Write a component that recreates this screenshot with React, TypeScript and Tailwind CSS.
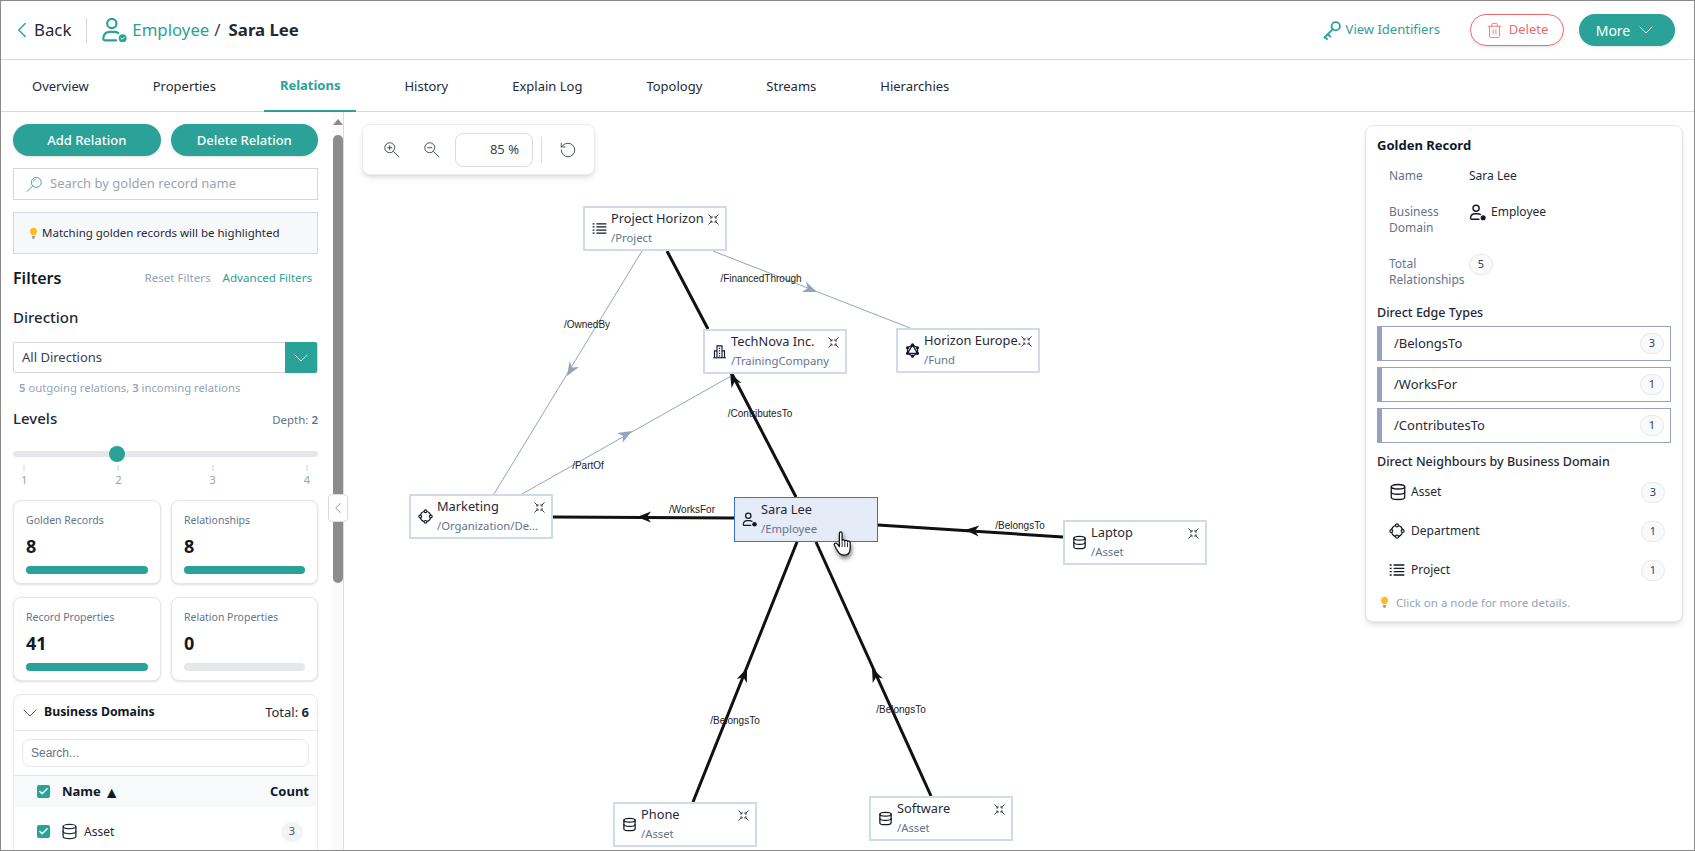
import { ChevronDown, ChevronLeft, Database, RotateCcw, Trash2, Check } from "lucide-react";

const tabs = ["Overview", "Properties", "Relations", "History", "Explain Log", "Topology", "Streams", "Hierarchies"];

function PersonCheck({ className, check }: { className?: string; check?: boolean }) {
  return (
    <svg viewBox="0 0 24 24" fill="none" stroke="currentColor" strokeWidth="2" strokeLinecap="round" className={className}>
      <circle cx="10" cy="6" r="4.300" />
      <path d="M14 21.500H3.800C2.700 21.500 2 20.800 2.100 19.700C2.500 16 5 13.800 8.500 13.800H12C13.500 13.800 14.800 14.100 16 14.800" />
      <circle cx="20" cy="19.500" r="3.600" fill="currentColor" stroke="none" />
      {check && <path d="M18.400 19.500l1.100 1.100 2-2.100" stroke="#fff" strokeWidth="0.9" />}
    </svg>
  );
}

function DeptIcon({ className }: { className?: string }) {
  return (
    <svg viewBox="0 0 24 24" fill="none" stroke="currentColor" strokeWidth="1.8" className={className}>
      <circle cx="12" cy="12" r="8.500" />
      <circle cx="12" cy="3.500" r="2.200" fill="#fff" />
      <circle cx="12" cy="20.500" r="2.200" fill="#fff" />
      <circle cx="3.500" cy="12" r="2.200" fill="#fff" />
      <circle cx="20.500" cy="12" r="2.200" fill="#fff" />
    </svg>
  );
}

function FundIcon({ className }: { className?: string }) {
  return (
    <svg viewBox="0 0 24 24" fill="none" stroke="currentColor" strokeWidth="2" strokeLinejoin="round" className={className}>
      <path d="M12 3L20 7.500V16.500L12 21L4 16.500V7.500Z" />
      <path d="M12 3L20 16.500H4Z" />
      <circle cx="12" cy="3" r="1.500" fill="currentColor" />
      <circle cx="20" cy="7.500" r="1.500" fill="currentColor" />
      <circle cx="20" cy="16.500" r="1.500" fill="currentColor" />
      <circle cx="12" cy="21" r="1.500" fill="currentColor" />
      <circle cx="4" cy="16.500" r="1.500" fill="currentColor" />
      <circle cx="4" cy="7.500" r="1.500" fill="currentColor" />
    </svg>
  );
}

function CompanyIcon({ className }: { className?: string }) {
  return (
    <svg viewBox="0 0 24 24" fill="none" stroke="currentColor" strokeWidth="1.800" className={className}>
      <path d="M2 22H22" />
      <path d="M8 22V3H16V22" />
      <path d="M8 11H4V22M16 11H20V22" />
      <path d="M11 7H13M11 11H13M11 15H13M11 19H13" />
    </svg>
  );
}

function ListIcon({ className }: { className?: string }) {
  return (
    <svg viewBox="0 0 24 24" fill="none" stroke="currentColor" strokeWidth="2" className={className}>
      <path d="M7 4.500H23M7 9.500H23M7 14.500H23M7 19.500H23" />
      <path d="M1 4.500H4M1 9.500H4M1 14.500H4M1 19.500H4" />
    </svg>
  );
}

function KeyIcon({ className }: { className?: string }) {
  return (
    <svg viewBox="0 0 24 24" fill="none" stroke="currentColor" strokeWidth="2.200" strokeLinecap="round" className={className}>
      <circle cx="16.500" cy="7.500" r="5" />
      <path d="M13 11L3 21M7 17L10 20M3.500 20.500L6 23" />
    </svg>
  );
}

function SearchIcon({ className }: { className?: string }) {
  return (
    <svg viewBox="0 0 24 24" fill="none" stroke="currentColor" strokeWidth="1.300" className={className}>
      <circle cx="14.500" cy="9" r="7" />
      <path d="M9.500 14L1.500 22" />
      <path d="M10 9A4.500 4.500 0 0 1 14.500 4.500" strokeWidth="0.800" />
    </svg>
  );
}

function MagnifierIcon({ plus, className }: { plus?: boolean; className?: string }) {
  return (
    <svg viewBox="0 0 24 24" fill="none" stroke="currentColor" strokeWidth="1.300" className={className}>
      <circle cx="9.500" cy="9.500" r="7" />
      <path d="M14.500 14.500L23 23" />
      <path d={plus ? "M6 9.500H13M9.500 6V13" : "M6 9.500H13"} />
    </svg>
  );
}

function CollapseIcon() {
  return (
    <svg viewBox="0 0 12 12" className="h-[11px] w-[11px]" fill="none" stroke="#111827" strokeWidth="0.900">
      <path d="M0.500 0.500L3.500 3.500M4.300 2.200V4.300H2.200M11.500 0.500L8.500 3.500M7.700 2.200V4.300H9.800M0.500 11.500L3.500 8.500M4.300 9.800V7.700H2.200M11.500 11.500L8.500 8.500M7.700 9.800V7.700H9.800" />
    </svg>
  );
}

function Bulb({ className }: { className?: string }) {
  return (
    <svg viewBox="0 0 12 18" className={className}>
      <path d="M6 1C3 1 1 3.200 1 5.800C1 8 2.600 9.200 3.400 11.500H8.600C9.400 9.200 11 8 11 5.800C11 3.200 9 1 6 1Z" fill="#fbbf24" />
      <path d="M3.800 12.500H8.200V15L6.800 16.500H5.200L3.800 15Z" fill="#a8a29e" />
    </svg>
  );
}

function Hand() {
  return (
    <svg viewBox="0 0 24 30" className="h-[27px] w-[22px] drop-shadow-[1px_3px_2px_rgba(0,0,0,0.5)]" fill="#fff" stroke="#111" strokeWidth="1.400" strokeLinejoin="round">
      <path d="M8 3.500C8 1.500 11 1.500 11 3.500V12C11 10.500 14 10.500 14 12.500C14 11 17 11 17 13C17 11.800 20 12 20 14.500V20C20 25 17.500 28 13 28C9 28 7.500 26 5.500 22.500L2.500 17C1.500 15 4 13.500 5.500 15.500L8 18.500Z" />
      <path d="M11 13V19M14 13V19M17 14V19" fill="none" strokeWidth="1" />
    </svg>
  );
}

const nodes = [
  { name: "Project Horizon", sub: "/Project", x: 583, y: 206, icon: <ListIcon className="h-[15px] w-[15px]" /> },
  { name: "TechNova Inc.", sub: "/TrainingCompany", x: 703, y: 329, icon: <CompanyIcon className="h-[15px] w-[15px]" /> },
  { name: "Horizon Europe.", sub: "/Fund", x: 896, y: 328, icon: <FundIcon className="h-[15px] w-[15px]" /> },
  { name: "Marketing", sub: "/Organization/De...", x: 409, y: 494, icon: <DeptIcon className="h-[15px] w-[15px]" /> },
  { name: "Sara Lee", sub: "/Employee", x: 734, y: 497, active: true, icon: <PersonCheck className="h-[15px] w-[15px]" /> },
  { name: "Laptop", sub: "/Asset", x: 1063, y: 520, icon: <Database className="h-[15px] w-[15px]" strokeWidth={2} /> },
  { name: "Phone", sub: "/Asset", x: 613, y: 802, icon: <Database className="h-[15px] w-[15px]" strokeWidth={2} /> },
  { name: "Software", sub: "/Asset", x: 869, y: 796, icon: <Database className="h-[15px] w-[15px]" strokeWidth={2} /> },
];

// x1,y1 -> x2,y2 in page coordinates, ax,ay is the arrow tip
const edges = [
  { x1: 667, y1: 251, x2: 708, y2: 329, strong: true },
  { x1: 796, y1: 497, x2: 732, y2: 374, ax: 730, ay: 373, strong: true },
  { x1: 734, y1: 518, x2: 553, y2: 517, ax: 637, ay: 517, strong: true },
  { x1: 1063, y1: 537, x2: 878, y2: 525, ax: 965, ay: 530, strong: true },
  { x1: 693, y1: 802, x2: 797, y2: 542, ax: 747, ay: 668, strong: true },
  { x1: 931, y1: 796, x2: 816, y2: 542, ax: 872, ay: 668, strong: true },
  { x1: 642, y1: 251, x2: 494, y2: 494, ax: 567, ay: 376 },
  { x1: 713, y1: 251, x2: 910, y2: 328, ax: 817, ay: 292 },
  { x1: 522, y1: 494, x2: 731, y2: 376, ax: 632, ay: 431 },
];

const edgeLabels = [
  { text: "/OwnedBy", x: 587, y: 325 },
  { text: "/FinancedThrough", x: 761, y: 279 },
  { text: "/ContributesTo", x: 760, y: 414 },
  { text: "/PartOf", x: 588, y: 466 },
  { text: "/WorksFor", x: 692, y: 510 },
  { text: "/BelongsTo", x: 1020, y: 526 },
  { text: "/BelongsTo", x: 735, y: 721 },
  { text: "/BelongsTo", x: 901, y: 710 },
];

function GraphNode({ node }: { node: (typeof nodes)[number] }) {
  return (
    <div
      className={`absolute flex h-[45px] w-[144px] items-center ${node.active ? "border-[1.5px] border-[#3b6fe0] bg-[#e5ecf8]" : "border-2 border-[#d0dbe9] bg-white"}`}
      style={{ left: node.x - 344, top: node.y - 112 }}
    >
      <span className="ml-[7px] flex w-[15px] justify-center text-[#111827]">{node.icon}</span>
      <div className="-mt-[3px] ml-[4px] min-w-0 flex-1">
        <div className="whitespace-nowrap text-[12.800px] leading-[20px] text-[#1f2937]">{node.name}</div>
        <div className="mt-px whitespace-nowrap text-[11.300px] leading-[18px] text-[#64748b]">{node.sub}</div>
      </div>
      {!node.active && (
        <span className="absolute right-[6px] top-[6px]"><CollapseIcon /></span>
      )}
    </div>
  );
}

function Graph() {
  return (
    <div className="relative flex-1 overflow-hidden bg-white">
      <svg viewBox="344 112 1350 738" className="absolute left-0 top-0 h-[738px] w-[1350px]">
        {edges.map((e, i) => {
          const color = e.strong ? "#111111" : "#94a3be";
          const angle = (Math.atan2(e.y2 - e.y1, e.x2 - e.x1) * 180) / Math.PI;
          return (
            <g key={i}>
              <line x1={e.x1} y1={e.y1} x2={e.x2} y2={e.y2} stroke={color} strokeWidth={e.strong ? 3 : 1} />
              {e.ax !== undefined && (
                <path d="M0 0L-14 -5.500L-10 0L-14 5.500Z" fill={color} transform={`translate(${e.ax} ${e.ay}) rotate(${angle})`} />
              )}
            </g>
          );
        })}
      </svg>
      {edgeLabels.map((l) => (
        <span
          key={l.text + l.x}
          className="absolute -translate-x-1/2 -translate-y-1/2 whitespace-nowrap font-['Liberation_Sans',sans-serif] text-[10px] leading-[12px] text-[#222]"
          style={{ left: l.x - 344, top: l.y - 112 }}
        >
          {l.text}
        </span>
      ))}
      {nodes.map((n) => (
        <GraphNode key={n.name} node={n} />
      ))}
      <span className="absolute left-[488px] top-[418px]"><Hand /></span>

      {/* zoom toolbar */}
      <div className="absolute left-[18px] top-[12px] flex h-[51px] w-[233px] items-center rounded-lg border border-[#ececec] bg-white shadow-md">
        <MagnifierIcon plus className="ml-[20px] h-[17px] w-[17px] text-[#374151]" />
        <MagnifierIcon className="ml-[23px] h-[17px] w-[17px] text-[#374151]" />
        <div className="ml-[15px] flex h-[34px] w-[78px] items-center justify-end rounded-lg border border-[#d9dde3] pr-[13px] text-[13px] text-[#374151]">85 %</div>
        <div className="ml-[8px] h-[26px] w-px bg-[#d9dde3]" />
        <RotateCcw className="ml-[17px] h-[18px] w-[18px] text-[#374151]" strokeWidth={1.2} />
      </div>

      <GoldenRecord />
    </div>
  );
}

function Badge({ value }: { value: number }) {
  return (
    <span className="flex h-[21px] w-[24px] items-center justify-center rounded-full border border-[#e5e7eb] bg-[#f9fafb] text-[11px] text-[#374151]">{value}</span>
  );
}

function GoldenRecord() {
  return (
    <div className="absolute left-[1021px] top-[13px] flex h-[497px] w-[318px] flex-col rounded-lg border border-[#e5e7eb] bg-white pl-[11px] pr-[11px] text-[12px] text-[#1f2937] shadow-md">
      <h3 className="mt-[9px] text-[13px] font-bold leading-[20px] text-[#111827]">Golden Record</h3>
      <div className="ml-[12px] mt-[11px] flex h-[20px] items-center">
        <span className="w-[80px] text-[#64748b]">Name</span>
        <span>Sara Lee</span>
      </div>
      <div className="ml-[12px] mt-[18px] flex">
        <span className="w-[80px] leading-[16px] text-[#64748b]">Business Domain</span>
        <span className="flex h-[16px] items-center">
          <PersonCheck className="mr-[5px] h-[17px] w-[17px] text-[#111827]" />
          Employee
        </span>
      </div>
      <div className="ml-[12px] mt-[20px] flex">
        <span className="w-[80px] leading-[16px] text-[#64748b]">Total Relationships</span>
        <span className="-mt-[2px]"><Badge value={5} /></span>
      </div>
      <h4 className="mt-[16px] text-[12.500px] font-medium leading-[18px] text-[#1f2937]">Direct Edge Types</h4>
      <div className="mt-[4px] flex flex-col gap-[6px]">
        {[["/BelongsTo", 3], ["/WorksFor", 1], ["/ContributesTo", 1]].map(([label, count]) => (
          <div key={label} className="flex h-[35px] w-[294px] items-center justify-between border border-l-[5px] border-[#94a3be] pl-[12px] pr-[6px] text-[13px]">
            <span>{label}</span>
            <Badge value={count as number} />
          </div>
        ))}
      </div>
      <h4 className="mt-[10px] text-[12.500px] font-medium leading-[18px] text-[#1f2937]">Direct Neighbours by Business Domain</h4>
      <div className="ml-[12px] mt-[11px] flex w-[276px] flex-col gap-[19px]">
        {[
          { label: "Asset", count: 3, icon: <Database className="h-[18px] w-[18px]" strokeWidth={1.700} /> },
          { label: "Department", count: 1, icon: <DeptIcon className="h-[16px] w-[16px]" /> },
          { label: "Project", count: 1, icon: <ListIcon className="h-[16px] w-[16px]" /> },
        ].map((row) => (
          <div key={row.label} className="flex h-[20px] items-center justify-between">
            <span className="flex items-center">
              <span className="flex w-[22px] text-[#111827]">{row.icon}</span>
              {row.label}
            </span>
            <Badge value={row.count} />
          </div>
        ))}
      </div>
      <div className="mt-[14px] flex items-center pl-[3px] text-[11.500px] text-[#94a3b8]">
        <Bulb className="mr-[7px] h-[13px] w-[9px]" />
        Click on a node for more details.
      </div>
    </div>
  );
}

function StatCard({ label, value, filled }: { label: string; value: number; filled?: boolean }) {
  return (
    <div className="flex h-[84px] flex-col rounded-lg border border-[#e5e7eb] bg-white px-3 shadow-sm">
      <span className="mt-[10px] text-[10.500px] leading-[18px] text-[#64748b]">{label}</span>
      <span className="mt-[5px] text-[18px] font-bold leading-[24px] text-[#111827]">{value}</span>
      <span className={`mt-[8px] h-2 rounded-full ${filled ? "bg-[#2aa297]" : "bg-[#e5e7eb]"}`} />
    </div>
  );
}

function TealCheck() {
  return (
    <span className="flex h-[13px] w-[13px] items-center justify-center rounded-[2px] bg-[#2aa297]">
      <Check className="h-[11px] w-[11px] text-white" strokeWidth={3} />
    </span>
  );
}

function LeftPanel() {
  return (
    <aside className="flex w-[343px] shrink-0 overflow-hidden border-r border-[#dcdcdc] bg-white">
      <div className="ml-3 w-[305px] shrink-0">
        <div className="mt-3 flex gap-[10px]">
          <button className="h-[32px] flex-1 rounded-full bg-[#2aa297] pt-px text-[13px] font-medium text-white shadow-sm">Add Relation</button>
          <button className="h-[32px] flex-1 rounded-full bg-[#2aa297] pt-px text-[13px] font-medium text-white shadow-sm">Delete Relation</button>
        </div>
        <div className="mt-3 flex h-[32px] items-center border border-[#d4d8de] pl-[12px] text-[13px] text-[#9ca3af]">
          <SearchIcon className="mr-[7px] h-[17px] w-[17px] text-[#2aa297]" />
          Search by golden record name
        </div>
        <div className="mt-3 flex h-[42px] items-center border border-[#d4d8e2] bg-[#f7f8fb] pl-[15px] text-[11.500px] text-[#1f2937]">
          <Bulb className="mr-[4px] h-[13px] w-[9px]" />
          Matching golden records will be highlighted
        </div>
        <div className="mt-[12px] flex h-[24px] items-center justify-between">
          <h2 className="text-[16px] font-semibold text-[#111827]">Filters</h2>
          <span className="pr-[6px] text-[11.600px]">
            <span className="text-[#94a3b8]">Reset Filters</span>
            <span className="ml-3 text-[#2aa297]">Advanced Filters</span>
          </span>
        </div>
        <h3 className="mt-[16px] text-[15px] font-medium leading-[22px] text-[#1f2937]">Direction</h3>
        <div className="mt-[14px] flex h-[31px] items-center justify-between rounded-[2px] border border-[#d4d8de] pl-[8px] text-[13px] text-[#374151]">
          All Directions
          <span className="flex h-[31px] w-[32px] items-center justify-center rounded-r-[2px] bg-[#2aa297]">
            <ChevronDown className="h-[24px] w-[24px] text-white" strokeWidth={1} />
          </span>
        </div>
        <p className="mt-[6px] pl-[6px] text-[11.300px] leading-[18px] text-[#94a3b8]"><b className="font-semibold">5</b> outgoing relations, <b className="font-semibold">3</b> incoming relations</p>
        <div className="mt-[10px] flex items-end justify-between">
          <h3 className="text-[15px] font-medium leading-[22px] text-[#1f2937]">Levels</h3>
          <span className="text-[11.500px] leading-[18px] text-[#64748b]">Depth: <b className="font-semibold">2</b></span>
        </div>
        <div className="relative mt-[22px] h-[6px] rounded-full bg-[#e5e7eb]">
          <span className="absolute left-[96px] top-[-5px] h-[16px] w-[16px] rounded-full bg-[#2aa297]" />
        </div>
        <div className="mt-[8px] flex justify-between px-[8px] text-[11px] leading-[14px] text-[#94a3b8]">
          {[1, 2, 3, 4].map((n) => (
            <span key={n} className="flex flex-col items-center">
              <span className="mb-[2px] h-[6px] w-[2px] bg-[#e5e7eb]" />
              {n}
            </span>
          ))}
        </div>
        <div className="mt-[13px] grid grid-cols-[148px_147px] gap-x-[10px] gap-y-[13px]">
          <StatCard label="Golden Records" value={8} filled />
          <StatCard label="Relationships" value={8} filled />
          <StatCard label="Record Properties" value={41} filled />
          <StatCard label="Relation Properties" value={0} />
        </div>
        <div className="mt-[13px] rounded-t-lg border border-[#e5e7eb]">
          <div className="flex h-[36px] items-center justify-between border-b border-[#e5e7eb] pl-[4px] pr-[8px] text-[13px]">
            <span className="flex items-center text-[12.300px] font-bold text-[#111827]">
              <ChevronDown className="mr-[2px] h-[24px] w-[24px] text-[#4b5563]" strokeWidth={1} />
              Business Domains
            </span>
            <span className="text-[#1f2937]">Total: <b>6</b></span>
          </div>
          <div className="mx-[8px] mt-[8px] flex h-[28px] items-center rounded-lg border border-[#e5e7eb] pl-[8px] font-['Liberation_Sans',sans-serif] text-[12px] text-[#6b7280]">Search...</div>
          <div className="mt-[8px] flex h-[32px] items-center justify-between border-t border-[#e5e7eb] bg-[#f8f9fa] pl-[23px] pr-[8px] text-[13px] font-bold text-[#111827]">
            <span className="flex items-center gap-[12px]">
              <TealCheck />
              <span className="flex items-center">Name <span className="ml-[3px] text-[16px] leading-none">▲</span></span>
            </span>
            Count
          </div>
          <div className="flex h-[49px] items-center justify-between pl-[23px] pr-[14px] text-[12px] text-[#1f2937]">
            <span className="flex items-center">
              <TealCheck />
              <Database className="ml-[11px] mr-[6px] h-[17px] w-[17px]" strokeWidth={1.800} />
              Asset
            </span>
            <span className="flex h-[20px] w-[22px] items-center justify-center rounded-full bg-[#f3f4f6] text-[11px] text-[#4b5563]">3</span>
          </div>
        </div>
      </div>
      {/* scrollbar */}
      <div className="ml-[15px] flex w-[10px] shrink-0 flex-col items-center bg-[#fafafa]">
        <span className="mt-[7px] h-0 w-0 border-x-[5px] border-b-[6px] border-x-transparent border-b-[#8c8c8c]" />
        <span className="mt-[10px] h-[448px] w-full shrink-0 rounded-full bg-[#8c8c8c]" />
      </div>
    </aside>
  );
}

export default function App() {
  return (
    <div className="flex h-[851px] w-[1695px] flex-col overflow-hidden border border-[#8a8a8a] bg-white font-['Noto_Sans',sans-serif] text-[#1f2937]">
      <header className="flex h-[59px] shrink-0 items-center border-b border-[#d9d9d9] pl-[8px] pr-[19px]">
        <ChevronLeft className="h-[26px] w-[26px] text-[#2aa297]" strokeWidth={1.300} />
        <span className="-ml-px text-[16.800px] text-[#1f2937]">Back</span>
        <span className="ml-[15px] h-[25px] w-px bg-[#d1d5db]" />
        <PersonCheck check className="ml-[14px] h-[26px] w-[26px] text-[#2aa297]" />
        <span className="ml-[5px] text-[16.800px] text-[#2aa297]">Employee</span>
        <span className="ml-[5px] text-[16.800px] text-[#374151]">/</span>
        <span className="ml-[8px] text-[16.800px] font-bold text-[#1f2937]">Sara Lee</span>
        <span className="ml-auto flex items-center text-[13px] text-[#2aa297]">
          <KeyIcon className="mr-[4px] h-[20px] w-[20px]" />
          View Identifiers
        </span>
        <button className="ml-[30px] flex h-[32px] w-[94px] items-center justify-center rounded-full border border-[#ee6b6b] text-[13px] text-[#ee6b6b] shadow-sm">
          <Trash2 className="mr-[6px] h-[17px] w-[17px]" strokeWidth={1.200} />
          Delete
        </button>
        <button className="ml-[15px] flex h-[32px] w-[96px] items-center justify-center rounded-full bg-[#2aa297] text-[14px] text-white shadow-sm">
          More
          <ChevronDown className="ml-[4px] h-[24px] w-[24px]" strokeWidth={1} />
        </button>
      </header>
      <nav className="flex h-[52px] shrink-0 gap-8 border-b border-[#d9d9d9] pl-[15px] pt-[2px] text-[13px]">
        {tabs.map((t) => (
          <span
            key={t}
            className={`flex items-center px-4 ${t === "Relations" ? "-mb-px border-b-2 border-[#2aa297] font-bold text-[#2aa297]" : "text-[#1f2937]"}`}
          >
            {t}
          </span>
        ))}
      </nav>
      <div className="relative flex min-h-0 flex-1">
        <LeftPanel />
        <Graph />
        {/* panel collapse handle */}
        <div className="absolute left-[327px] top-[382px] flex h-[28px] w-[20px] items-center justify-center rounded-[4px] border border-[#d9dde3] bg-white">
          <ChevronLeft className="h-[22px] w-[22px] text-[#6b7280]" strokeWidth={1} />
        </div>
      </div>
    </div>
  );
}
